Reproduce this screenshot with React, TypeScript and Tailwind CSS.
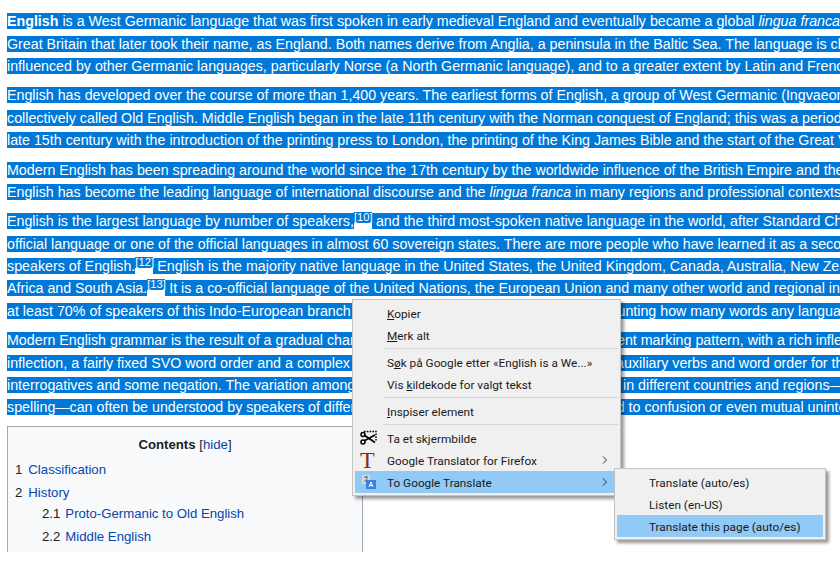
import React from 'react';

const wikiFont = { fontFamily: '"Liberation Sans", Arial, sans-serif' };

function Line({ children }: { children: React.ReactNode }) {
  return (
    <div className="h-[22.4px] whitespace-nowrap">
      <span className="bg-[#0078d7] text-white">{children}</span>
    </div>
  );
}

function Ref({ n }: { n: number }) {
  return (
    <span className="mt-[2px] inline-block h-[17px] w-[18px] bg-white align-top">
      <span className="block h-[11px] bg-[#0078d7] text-center text-[11.2px] leading-[11px] text-white">[{n}]</span>
    </span>
  );
}

function Item({ children }: { children: React.ReactNode }) {
  return (
    <div className="h-[22px] whitespace-pre pl-[32px] pt-[3px] text-[11.8px] leading-[18px] text-[#1a1a1a]">
      {children}
    </div>
  );
}

function Sep() {
  return <div className="my-[2px] ml-[28px] h-px bg-[#d5d5d5]" />;
}

function ScissorsIcon() {
  return (
    <svg width="17" height="16" viewBox="0 0 17 16" className="text-black">
      <path d="M4 1.5h12v9" fill="none" stroke="currentColor" strokeWidth="1.4" strokeDasharray="1.6 1.2" />
      <path d="M4 5 L15 12.5 M15 5 L4 11" stroke="currentColor" strokeWidth="1.6" fill="none" />
      <circle cx="3" cy="4.5" r="2" fill="none" stroke="currentColor" strokeWidth="1.5" />
      <circle cx="3" cy="12" r="2" fill="none" stroke="currentColor" strokeWidth="1.5" />
    </svg>
  );
}

function TranslateIcon() {
  return (
    <svg width="16" height="16" viewBox="0 0 16 16">
      <rect x="1" y="1" width="8" height="9" fill="#d8d8d8" />
      <path d="M3 3h4M5 2v2M3.5 8l3-4" stroke="#666" strokeWidth="1" fill="none" />
      <rect x="5" y="6" width="10" height="9" fill="#3f7fe0" />
      <path d="M8 13l2-5 2 5M8.8 11.5h2.4" stroke="#fff" strokeWidth="1" fill="none" />
    </svg>
  );
}

function Chevron() {
  return (
    <svg width="6" height="8" viewBox="0 0 6 8" className="absolute right-[10px] top-[7px]">
      <path d="M1 0.5 L4.5 4 L1 7.5" stroke="#333" strokeWidth="1" fill="none" />
    </svg>
  );
}

function ContextMenu() {
  return (
    <div
      className="absolute left-[352px] top-[299px] w-[269px] border border-[#c4c4c4] bg-[#f0f0f0] p-[2px] shadow-[3px_3px_3px_rgba(0,0,0,0.4)]"
      style={{ fontFamily: 'Roboto, "Open Sans", sans-serif' }}
    >
      <Item><u>K</u>opier</Item>
      <Item><u>M</u>erk alt</Item>
      <Sep />
      <Item>S<u>ø</u>k på Google etter «English is a We...»</Item>
      <Item>Vis <u>k</u>ildekode for valgt tekst</Item>
      <Sep />
      <Item><u>I</u>nspiser element</Item>
      <Sep />
      <div className="relative">
        <div className="absolute left-[5px] top-[3px]"><ScissorsIcon /></div>
        <Item>Ta et skjermbilde</Item>
      </div>
      <div className="relative">
        <span className="absolute left-[5px] top-[-1px] text-[24px] leading-[24px] text-[#8b2a1e]" style={{ fontFamily: '"Liberation Serif", serif' }}>T</span>
        <Item>Google Translator for Firefox</Item>
        <Chevron />
      </div>
      <div className="relative bg-[#91c9f7]">
        <div className="absolute left-[6px] top-[3px]"><TranslateIcon /></div>
        <Item>To Google Translate</Item>
        <Chevron />
      </div>
    </div>
  );
}

function SubMenu() {
  return (
    <div
      className="absolute left-[614px] top-[468px] w-[212px] border border-[#c4c4c4] bg-[#f0f0f0] p-[2px] shadow-[3px_3px_3px_rgba(0,0,0,0.4)]"
      style={{ fontFamily: 'Roboto, "Open Sans", sans-serif' }}
    >
      <Item>Translate (auto/es)</Item>
      <Item>Listen (en-US)</Item>
      <div className="bg-[#91c9f7]">
        <Item>Translate this page (auto/es)</Item>
      </div>
    </div>
  );
}

export default function App() {
  return (
    <div className="relative h-[561px] w-[840px] overflow-hidden bg-white" style={wikiFont}>
      <div className="px-[7px] pt-[10.2px] text-[14.25px] leading-[22.4px]">
        <div className="mb-[7px]">
          <Line><b>English</b> is a West Germanic language that was first spoken in early medieval England and eventually became a global <i>lingua franca</i></Line>
          <Line>Great Britain that later took their name, as England. Both names derive from Anglia, a peninsula in the Baltic Sea. The language is closely related to Frisian and Low Saxon</Line>
          <Line>influenced by other Germanic languages, particularly Norse (a North Germanic language), and to a greater extent by Latin and French.</Line>
        </div>
        <div className="mb-[7px]">
          <Line>English has developed over the course of more than 1,400 years. The earliest forms of English, a group of West Germanic (Ingvaeonic) dialects brought to</Line>
          <Line>collectively called Old English. Middle English began in the late 11th century with the Norman conquest of England; this was a period in which the language</Line>
          <Line>late 15th century with the introduction of the printing press to London, the printing of the King James Bible and the start of the Great Vowel Shift.</Line>
        </div>
        <div className="mb-[7px]">
          <Line>Modern English has been spreading around the world since the 17th century by the worldwide influence of the British Empire and the United States</Line>
          <Line>English has become the leading language of international discourse and the <i>lingua franca</i> in many regions and professional contexts such as science</Line>
        </div>
        <div className="mb-[7px]">
          <Line>English is the largest language by number of speakers,<Ref n={10} /> and the third most-spoken native language in the world, after Standard Chinese and Spanish.</Line>
          <Line>official language or one of the official languages in almost 60 sovereign states. There are more people who have learned it as a second language than</Line>
          <Line>speakers of English.<Ref n={12} /> English is the majority native language in the United States, the United Kingdom, Canada, Australia, New Zealand and Ireland</Line>
          <Line>Africa and South Asia.<Ref n={13} /> It is a co-official language of the United Nations, the European Union and many other world and regional international</Line>
          <Line>at least 70% of speakers of this Indo-European branch, and how many words is difficult and accounting how many words any language has</Line>
        </div>
        <div className="mb-[7px]">
          <Line>Modern English grammar is the result of a gradual change from a dependent and a head-dependent marking pattern, with a rich inflectional</Line>
          <Line>inflection, a fairly fixed SVO word order and a complex syntax. Modern English relies more upon auxiliary verbs and word order for the expression of</Line>
          <Line>interrogatives and some negation. The variation among the accents and dialects of English heard in different countries and regions—in terms of</Line>
          <Line>spelling—can often be understood by speakers of different dialects, but in extreme cases can lead to confusion or even mutual unintelligibility</Line>
        </div>
      </div>

      {/* Table of contents, cut off by the window */}
      <div className="ml-[7px] mt-[7px] h-[126px] w-[356px] overflow-hidden border-x border-t border-[#a2a9b1] bg-[#f8f9fa] px-[7px] pt-[7px] text-[13.2px] leading-[21px] text-[#202122]">
        <div className="text-center">
          <b>Contents</b> <span>[</span><span className="text-[#0645ad]">hide</span><span>]</span>
        </div>
        <div className="mt-[4px] h-[23px]">1<span className="ml-[6px] text-[#0645ad]">Classification</span></div>
        <div className="h-[21px]">2<span className="ml-[6px] text-[#0645ad]">History</span></div>
        <div className="ml-[27px] h-[23px]">2.1<span className="ml-[5px] text-[#0645ad]">Proto-Germanic to Old English</span></div>
        <div className="ml-[27px] h-[23px]">2.2<span className="ml-[5px] text-[#0645ad]">Middle English</span></div>
      </div>

      <ContextMenu />
      <SubMenu />
    </div>
  );
}
